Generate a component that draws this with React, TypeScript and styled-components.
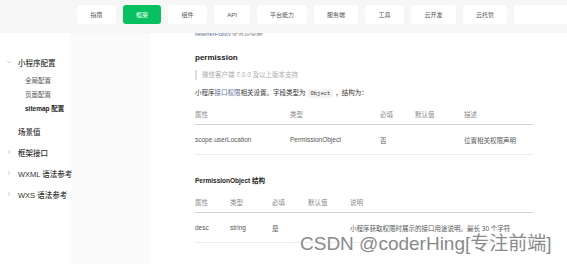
import React from 'react';
import styled, { createGlobalStyle } from 'styled-components';

const GlobalStyle = createGlobalStyle`
  html, body {
    margin: 0;
    padding: 0;
    background: #fff;
  }
  body {
    font-family: "Liberation Sans", "Noto Sans CJK SC", sans-serif;
    color: #333;
    overflow: hidden;
  }
`;

const Page = styled.div`
  position: relative;
  width: 567px;
  height: 264px;
  overflow: hidden;
`;

const TopBar = styled.div`
  height: 33px;
  background: #f6f6f6;
  display: flex;
  align-items: flex-start;
  padding: 5px 0 0 77px;
  gap: 7px;
  box-sizing: border-box;
`;

const NavButton = styled.div<{ $w: number; $active?: boolean }>`
  flex: none;
  width: ${(p) => p.$w}px;
  height: 19px;
  border-radius: 3px;
  background: ${(p) => (p.$active ? '#07c160' : '#fff')};
  color: ${(p) => (p.$active ? '#fff' : '#555')};
  font-size: 6px;
  display: flex;
  align-items: center;
  justify-content: center;
`;

const Body = styled.div`
  display: flex;
  height: 231px;
`;

const Sidebar = styled.div`
  width: 150px;
  flex: none;
  background: linear-gradient(90deg, #fff 0, #fff 70px, #fafafa 72px, #fafafa 100%);
  padding-top: 23px;
  box-sizing: border-box;
`;

const NavItem = styled.div<{ $gap: number }>`
  display: flex;
  align-items: center;
  height: 12px;
  margin-top: ${(p) => p.$gap}px;
  font-size: 7.5px;
  color: #333;
  font-weight: 500;
`;

const Arrow = styled.span`
  width: 18px;
  padding-left: 6px;
  box-sizing: border-box;
  display: flex;
  align-items: center;
  color: #b5b5b5;
`;

const SubItem = styled.div<{ $strong?: boolean; $first?: boolean }>`
  height: 14px;
  line-height: 14px;
  margin-top: ${(p) => (p.$first ? 6 : 0)}px;
  padding-left: 25px;
  font-size: 6.5px;
  color: ${(p) => (p.$strong ? '#222' : '#555')};
  font-weight: ${(p) => (p.$strong ? 700 : 400)};
`;

const Content = styled.div`
  flex: 1;
  padding-left: 45px;
  padding-right: 34px;
`;

const CutLine = styled.div`
  height: 3px;
  overflow: hidden;
  font-size: 6px;
  line-height: 2px;
  color: #888;
  span {
    color: #576b95;
  }
`;

const Title = styled.div`
  margin-top: 16px;
  font-size: 8px;
  font-weight: 700;
  color: #222;
  line-height: 12px;
`;

const Quote = styled.div`
  margin-top: 6px;
  border-left: 2px solid #ddd;
  padding-left: 5px;
  height: 10px;
  line-height: 10px;
  font-size: 6.5px;
  color: #aaa;
`;

const Para = styled.div`
  margin-top: 8px;
  font-size: 6.5px;
  line-height: 10px;
  color: #333;
`;

const Link = styled.span`
  color: #576b95;
`;

const Code = styled.code`
  font-family: "Liberation Mono", monospace;
  font-size: 5.5px;
  background: #f3f3f3;
  padding: 1px 3px;
  border-radius: 2px;
  margin: 0 2px;
`;

const Table = styled.div<{ $cols: string; $top: number }>`
  display: grid;
  grid-template-columns: ${(p) => p.$cols};
  margin-top: ${(p) => p.$top}px;
`;

const HeadCell = styled.div`
  height: 22px;
  display: flex;
  align-items: center;
  font-size: 6.5px;
  color: #888;
  border-bottom: 1px solid #d4d4d4;
  box-sizing: border-box;
`;

const Cell = styled.div`
  height: 30px;
  display: flex;
  align-items: center;
  font-size: 6.5px;
  color: #555;
  border-bottom: 1px solid #ececec;
  white-space: nowrap;
  box-sizing: border-box;
`;

const SubTitle = styled.div`
  margin-top: 21px;
  font-size: 6.5px;
  font-weight: 700;
  color: #222;
  line-height: 10px;
`;

const Watermark = styled.div`
  position: absolute;
  left: 300px;
  top: 232px;
  font-size: 19px;
  line-height: 24px;
  color: #8a8a8a;
  white-space: nowrap;
  text-shadow: 0 0 2px #fff, 0 0 2px #fff, 0 0 2px #fff;
`;

const ChevronDown = () => (
  <svg width="6" height="6" viewBox="0 0 10 10">
    <path d="M2 3.5 L5 6.5 L8 3.5" fill="none" stroke="currentColor" strokeWidth="1.2" />
  </svg>
);

const ChevronRight = () => (
  <svg width="6" height="6" viewBox="0 0 10 10">
    <path d="M3.5 2 L6.5 5 L3.5 8" fill="none" stroke="currentColor" strokeWidth="1.2" />
  </svg>
);

const navs = [
  { label: '指南', w: 39 },
  { label: '框架', w: 38, active: true },
  { label: '组件', w: 39 },
  { label: 'API', w: 36 },
  { label: '平台能力', w: 50 },
  { label: '服务端', w: 44 },
  { label: '工具', w: 39 },
  { label: '云开发', w: 45 },
  { label: '云托管', w: 44 },
  { label: '', w: 60 },
];

const App = () => {
  return (
    <Page>
      <GlobalStyle />
      <TopBar>
        {navs.map((n, i) => (
          <NavButton key={i} $w={n.w} $active={n.active}>
            {n.label}
          </NavButton>
        ))}
      </TopBar>
      <Body>
        <Sidebar>
          <NavItem $gap={0}>
            <Arrow>
              <ChevronDown />
            </Arrow>
            小程序配置
          </NavItem>
          <SubItem $first>全局配置</SubItem>
          <SubItem>页面配置</SubItem>
          <SubItem $strong>sitemap 配置</SubItem>
          <NavItem $gap={9}>
            <Arrow />
            场景值
          </NavItem>
          <NavItem $gap={9}>
            <Arrow>
              <ChevronRight />
            </Arrow>
            框架接口
          </NavItem>
          <NavItem $gap={9}>
            <Arrow>
              <ChevronRight />
            </Arrow>
            WXML 语法参考
          </NavItem>
          <NavItem $gap={9}>
            <Arrow>
              <ChevronRight />
            </Arrow>
            WXS 语法参考
          </NavItem>
        </Sidebar>
        <Content>
          <CutLine>
            <span>referrerPolicy</span> 配置项说明
          </CutLine>
          <Title>permission</Title>
          <Quote>微信客户端 7.0.0 及以上版本支持</Quote>
          <Para>
            小程序<Link>接口权限</Link>相关设置。字段类型为<Code>Object</Code>，结构为：
          </Para>
          <Table $cols="95px 90px 35px 49px 1fr" $top={4}>
            <HeadCell>属性</HeadCell>
            <HeadCell>类型</HeadCell>
            <HeadCell>必填</HeadCell>
            <HeadCell>默认值</HeadCell>
            <HeadCell>描述</HeadCell>
            <Cell>scope.userLocation</Cell>
            <Cell>PermissionObject</Cell>
            <Cell>否</Cell>
            <Cell></Cell>
            <Cell>位置相关权限声明</Cell>
          </Table>
          <SubTitle>PermissionObject 结构</SubTitle>
          <Table $cols="35px 42px 36px 42px 1fr" $top={5}>
            <HeadCell>属性</HeadCell>
            <HeadCell>类型</HeadCell>
            <HeadCell>必填</HeadCell>
            <HeadCell>默认值</HeadCell>
            <HeadCell>说明</HeadCell>
            <Cell>desc</Cell>
            <Cell>string</Cell>
            <Cell>是</Cell>
            <Cell></Cell>
            <Cell>小程序获取权限时展示的接口用途说明。最长 30 个字符</Cell>
          </Table>
        </Content>
      </Body>
      <Watermark>CSDN @coderHing[专注前端]</Watermark>
    </Page>
  );
};

export default App;
